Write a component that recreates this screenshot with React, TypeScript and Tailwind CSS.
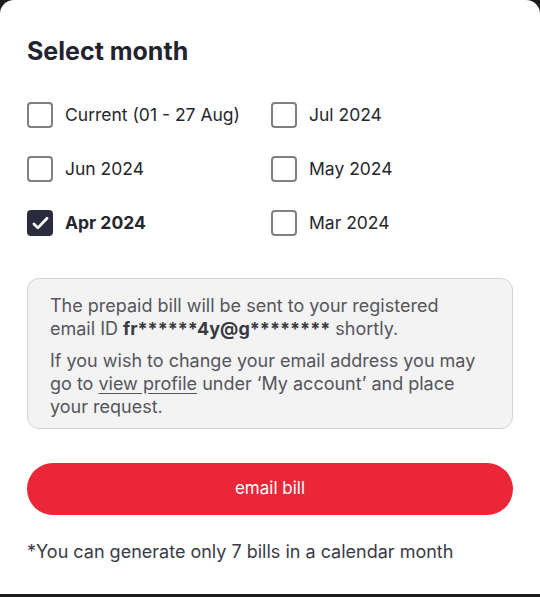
import { useState } from 'react';

const months = [
  'Current (01 - 27 Aug)',
  'Jul 2024',
  'Jun 2024',
  'May 2024',
  'Apr 2024',
  'Mar 2024',
];

function Checkbox({ checked }: { checked: boolean }) {
  if (checked) {
    return (
      <span className="flex h-[26px] w-[26px] shrink-0 items-center justify-center rounded-[4px] bg-[#2a2c3d]">
        <svg viewBox="0 0 24 24" className="h-[21px] w-[21px]" fill="none" stroke="white" strokeWidth="3.2" strokeLinecap="round" strokeLinejoin="round">
          <path d="M4.5 12.5l4.5 4.5L19.5 6" />
        </svg>
      </span>
    );
  }
  return <span className="h-[26px] w-[26px] shrink-0 rounded-[4px] border-2 border-[#7f7f84] bg-white" />;
}

export default function App() {
  const [selected, setSelected] = useState('Apr 2024');

  return (
    <div className="flex h-[597px] w-[540px] flex-col bg-[#1c1c1c]" style={{ fontFamily: 'Inter, "Noto Sans", sans-serif' }}>
      <div className="flex flex-1 flex-col rounded-t-[14px] bg-white px-[27px] pt-[35px]">
        <h1 className="text-[25px] leading-[32px] font-bold text-[#23232f]">Select month</h1>

        {/* month options */}
        <div className="mt-[35px] grid grid-cols-[244px_1fr] gap-y-[28px]">
          {months.map((m) => {
            const checked = m === selected;
            return (
              <button
                key={m}
                type="button"
                onClick={() => setSelected(m)}
                className="flex items-center gap-[12px] text-left"
              >
                <Checkbox checked={checked} />
                <span className={`text-[17.5px] leading-[26px] text-[#26262f] ${checked ? 'font-bold' : 'font-normal'}`}>{m}</span>
              </button>
            );
          })}
        </div>

        {/* info note — lines broken as in the app */}
        <div className="mt-[42px] rounded-[12px] border border-[#d4d4d6] bg-[#f3f3f4] px-[22px] pt-[15px] pb-[10px] text-[18px] leading-[23px] text-[#55555c]">
          <p>
            The prepaid bill will be sent to your registered
            <br />
            email ID <span className="font-bold text-[#3a3a42]">fr******4y@g********</span> shortly.
          </p>
          <p className="mt-[9px]">
            If you wish to change your email address you may
            <br />
            go to <span className="underline underline-offset-[3px]">view profile</span> under ‘My account’ and place
            <br />
            your request.
          </p>
        </div>

        <button type="button" className="mt-[34px] h-[52px] w-full rounded-full bg-[#ea2637] text-[17px] text-white">
          email bill
        </button>

        <p className="mt-[25px] text-[18px] leading-[24px] text-[#3a3a46]">*You can generate only 7 bills in a calendar month</p>
      </div>
      <div className="h-[3px]" />
    </div>
  );
}
